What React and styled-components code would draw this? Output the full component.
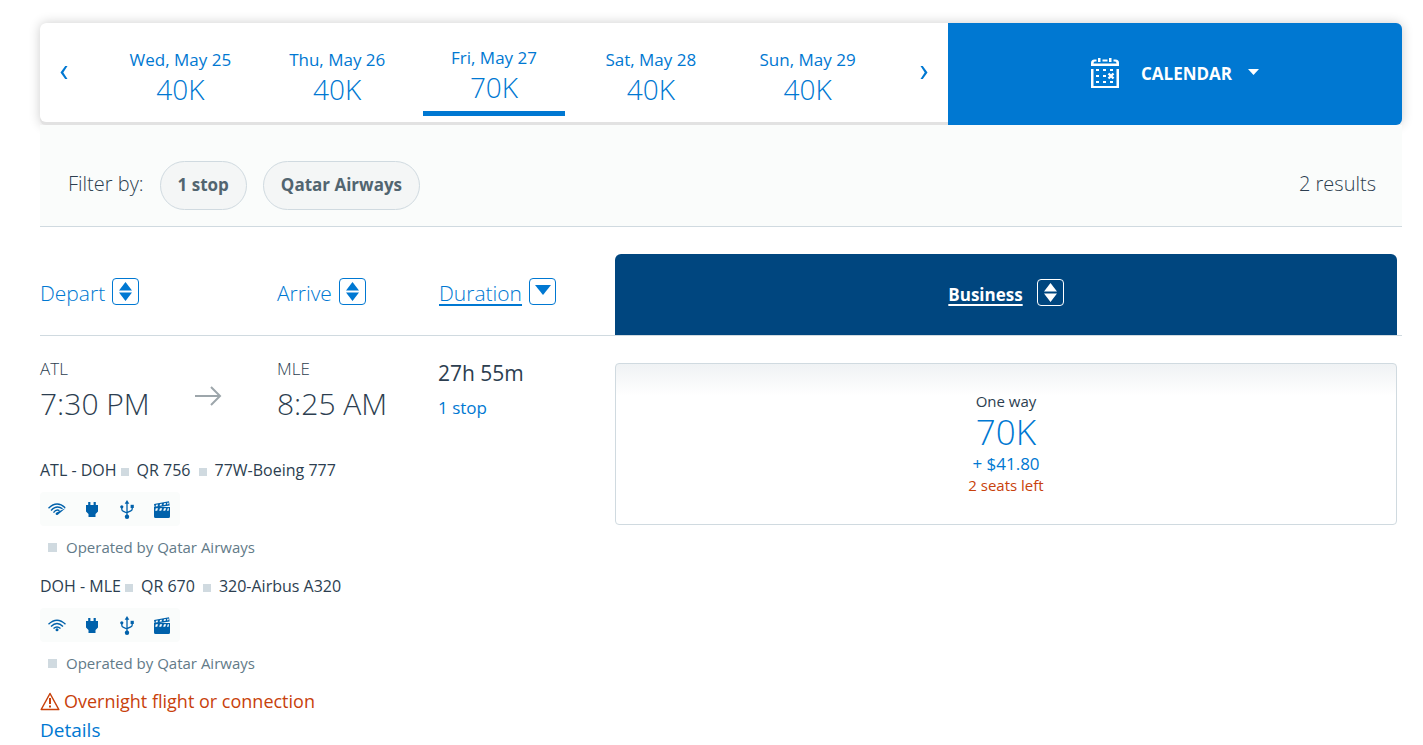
import styled, {createGlobalStyle, css} from "styled-components";
import {useState} from "react";

const GlobalStyle = createGlobalStyle`
  * {
    box-sizing: border-box;
  }
  body {
    margin: 0;
    background: #fff;
    color: #2c3e50;
    font-family: "Open Sans", "Noto Sans", sans-serif;
    font-weight: 300;
    font-size: 16px;
    line-height: 24px;
  }
  button {
    font: inherit;
    color: inherit;
    background: none;
    border: 0;
    padding: 0;
    cursor: pointer;
  }
  a {
    color: #0078d2;
    text-decoration: none;
  }
  svg {
    display: block;
    flex: none;
  }
`;

const Page = styled.main`
  padding: 23px 21px 0 40px;
`;

const DateBar = styled.div`
  display: flex;
  align-items: flex-start;
  border-radius: 6px;
  box-shadow: 0 0 12px rgba(0, 0, 0, .2);
  background: #e2e2e2;
`;

const DateStrip = styled.div`
  flex: 2;
  display: flex;
  align-items: stretch;
  height: 99px;
  background: #fff;
  border-radius: 6px 0 0 6px;
  color: #0078d2;
`;

const NavButton = styled.button`
  width: 48px;
  display: grid;
  place-items: center;
`;

const Days = styled.div`
  flex: 1;
  display: grid;
  grid-template-columns: repeat(5, 1fr);
  padding: 0 14px;
`;

const Day = styled.button`
  display: flex;
  flex-direction: column;
  align-items: center;
  margin: 0 7px 6px;
  padding-top: 25px;
  line-height: 24px;
  font-size: 17px;
  font-weight: 400;
  border-bottom: 5px solid transparent;
  ${props => props.$active && css`
    padding-top: 23px;
    border-color: #0078d2;
  `}
`;

const Price = styled.span`
  font-size: 28px;
  font-weight: 300;
  line-height: 34px;
`;

const CalendarButton = styled.button`
  flex: 1;
  display: flex;
  align-items: center;
  justify-content: center;
  gap: 22px;
  height: 102px;
  background: #0078d2;
  border-radius: 0 6px 6px 0;
  color: #fff;
  font-size: 17px;
  font-weight: 700;
`;

const CalendarLabel = styled.span`
  display: flex;
  align-items: center;
  gap: 16px;
`;

const FilterBar = styled.section`
  display: flex;
  align-items: center;
  gap: 16px;
  padding: 36px 26px 16px 28px;
  background: #fafcfb;
  border-bottom: 1px solid #d0dae0;
  font-size: 20px;
`;

const FilterText = styled.span`
  padding-bottom: 4px;

  &:last-child {
    margin-left: auto;
  }
`;

const Pill = styled.button`
  height: 49px;
  padding: 0 17px 2px;
  border: 1px solid #d0dae0;
  border-radius: 25px;
  background: #f4f6f6;
  color: #526570;
  font-size: 17px;
  font-weight: 700;
`;

const Columns = styled.div`
  display: grid;
  grid-template-columns: 237px 162px 176px 1fr;
  padding-right: 5px;
`;

const HeaderRow = styled(Columns)`
  margin-top: 27px;
  height: 82px;
  border-bottom: 1px solid #d0dae0;
`;

const SortBox = styled.span`
  width: 27px;
  height: 27px;
  display: grid;
  place-items: center;
  border: 1px solid currentColor;
  border-radius: 4px;
`;

const SortButton = styled.button`
  display: flex;
  align-items: center;
  gap: 7px;
  padding-bottom: 3px;
  color: #0078d2;
  font-size: 21px;
  text-decoration: ${props => props.$sorted ? "underline" : "none"};
  text-decoration-thickness: 2px;
  text-underline-offset: 3px;

  ${SortBox} {
    margin-bottom: 4px;
  }
`;

const CabinButton = styled(SortButton)`
  justify-content: center;
  gap: 14px;
  padding-bottom: 0;
  background: #00467f;
  border-radius: 6px 6px 0 0;
  color: #fff;
  font-size: 17px;
  font-weight: 700;
`;

const Flight = styled.article`
  display: grid;
  grid-template-columns: 575px 1fr;
  align-items: start;
  padding-right: 5px;
`;

const Times = styled.div`
  display: grid;
  grid-template-columns: 237px 161px 1fr;
  height: 102px;
  margin-top: 20px;
`;

const Stop = styled.div`
  display: flex;
  justify-content: space-between;
  padding-right: 55px;
`;

const Airport = styled.div`
  font-size: 17px;
  line-height: 26px;
`;

const Time = styled.div`
  font-size: 30px;
  line-height: 44px;
  white-space: nowrap;
`;

const ArrowWrap = styled.div`
  padding-top: 29px;
`;

const Duration = styled.div`
  font-size: 21px;
  font-weight: 400;
  line-height: 34px;
`;

const StopsLink = styled.a`
  display: block;
  font-size: 17px;
  font-weight: 400;
  line-height: 36px;
`;

const SegmentInfo = styled.div`
  display: flex;
  align-items: center;
  font-weight: 400;
`;

const Square = styled.span`
  width: 8px;
  height: 8px;
  margin: 4px 8px 0 ${props => props.$tight ? "4px" : "8px"};
  background: #d0dae0;
`;

const Amenities = styled.div`
  display: flex;
  width: 140px;
  height: 34px;
  margin: 10px 0 9px;
  padding-right: 1px;
  background: #fafcfb;
  border-radius: 4px;
  color: #0061ab;
`;

const Amenity = styled.span`
  flex: 1;
  display: grid;
  place-items: center;
`;

const Operated = styled.div`
  display: flex;
  align-items: center;
  gap: 9px;
  padding: 0 0 15px 8px;
  color: #627a88;
  font-size: 15px;
  font-weight: 400;

  &::before {
    content: "";
    width: 9px;
    height: 9px;
    background: #d0dae0;
  }
`;

const Warning = styled.div`
  display: flex;
  align-items: center;
  gap: 4px;
  margin-top: -3px;
  color: #c8410b;
  font-size: 18px;
  font-weight: 400;
  line-height: 28px;
`;

const DetailsLink = styled.a`
  display: block;
  font-size: 19px;
  font-weight: 400;
  line-height: 30px;
`;

const Fare = styled.button`
  display: flex;
  flex-direction: column;
  align-items: center;
  height: 162px;
  margin-top: 27px;
  padding-top: 27px;
  border: 1px solid #d0dae0;
  border-radius: 4px;
  background: linear-gradient(#eff2f4, #fff 32px);
  font-size: 15px;
  font-weight: 400;
  line-height: 20px;
`;

const FarePrice = styled.span`
  color: #0078d2;
  font-size: 35px;
  font-weight: 300;
  line-height: 42px;
`;

const Tax = styled.span`
  color: #0078d2;
  font-size: 17px;
  line-height: 22px;
`;

const Seats = styled.span`
  color: #c8410b;
`;

function Chevron({flip}) {
  return (
    <svg width="8" height="13" viewBox="0 0 8 13" fill="currentColor">
      <path d={flip ? "M0.5 0H2.8L7.5 6.5L2.8 13H0.5L4.7 6.5Z" : "M7.5 0H5.2L0.5 6.5L5.2 13H7.5L3.3 6.5Z"}/>
    </svg>
  );
}

function CalendarIcon() {
  return (
    <svg width="28" height="33" viewBox="0 0 28 33" fill="#fff">
      <path d="M0 8V5Q0 1.5 3.5 1.5H5.5V3.5H4Q2.5 3.5 2.5 5.5H25.5Q25.5 3.5 24 3.5H22.5V1.5H24.5Q28 1.5 28 5V8ZM7 0H9.5V4H7ZM11.5 1.5H16.5V3.5H11.5ZM18 0H20.5V4H18Z"/>
      <path d="M0 11H2.5V28H25.5V11H28V30H0Z"/>
      <path d="M5 11H8V13H5ZM12 11H15V13H12ZM19 11H22V13H19ZM5 17H8V19H5ZM12 17H15V19H12ZM5 23H8V25H5ZM12 23H15V25H12ZM19 23H22V25H19Z"/>
      <path d="M17.5 15.5L22.5 20.5M22.5 15.5L17.5 20.5" stroke="#fff" strokeWidth="2.4"/>
    </svg>
  );
}

function SortIcon({down}) {
  return (
    <SortBox>
      {down ? (
        <svg width="16" height="20" viewBox="0 0 16 20" fill="currentColor">
          <path d="M0 4H16L8 14Z"/>
        </svg>
      ) : (
        <svg width="13" height="19" viewBox="0 0 13 19" fill="currentColor">
          <path d="M6.5 0L13 8.5H0ZM0 10.5H13L6.5 19Z"/>
        </svg>
      )}
    </SortBox>
  );
}

function WifiIcon({satellite}) {
  return (
    <svg width="18" height="14" viewBox="0 0 18 14" fill="none" stroke="currentColor" strokeWidth="1.4">
      <path d={satellite
        ? "M0.5 6.2Q9 -1.8 17.2 5.8M3 8.5Q8.5 2.6 14.5 6.8M5.5 10.6Q8.2 6.8 11.5 8.6"
        : "M0.5 6.2Q9 -1.8 17.5 6.2M3 8.5Q9 2.6 15 8.5M5.5 10.6Q9 7.2 12.5 10.6"}/>
      {satellite
        ? <path d="M17.8 6L9.8 12.8Q8 13.6 7.6 12Q7.6 11 8.6 10.6Z" fill="currentColor" stroke="none"/>
        : <circle cx="9" cy="11.8" r="1.5" fill="currentColor" stroke="none"/>}
    </svg>
  );
}

function PlugIcon() {
  return (
    <svg width="12" height="15" viewBox="0 0 12 15" fill="currentColor">
      <path d="M2.2 0H4.4V3H7.6V0H9.8V3H12V9.5L9.5 12V15H2.5V12L0 9.5V3H2.2Z"/>
    </svg>
  );
}

function UsbIcon() {
  return (
    <svg width="14" height="19" viewBox="0 0 14 19" fill="currentColor">
      <path d="M7 0L9.3 3.8H4.7Z"/>
      <circle cx="7" cy="16.8" r="2.2"/>
      <circle cx="1.8" cy="6.8" r="1.6"/>
      <path d="M10.6 4.8H13.8V8H10.6Z"/>
      <path d="M7 3V17M1.8 7V9.2Q1.8 10.8 3.5 11.4L7 13M12.2 7V9Q12.2 10.2 10.8 10.8L7 12.6" fill="none" stroke="currentColor" strokeWidth="1.3"/>
    </svg>
  );
}

function MovieIcon() {
  return (
    <svg width="16" height="17" viewBox="0 0 16 17" fill="currentColor">
      <path d="M0 3L15 0.2L15.7 4.6L0.7 6.7ZM0 6H16V15.5Q16 17 14.5 17H1.5Q0 17 0 15.5Z"/>
      <path d="M2 3.8L4 3.4L3.6 5.2L1.6 5.6ZM6 3L8 2.7L7.6 4.4L5.6 4.8ZM10 2.3L12 1.9L11.6 3.7L9.6 4ZM13.3 1.7L14.5 1.5L14.7 3.1L13.1 3.4ZM1.8 7.2H4L3.2 9.8H1.2ZM6 7.2H8.2L7.2 9.8H5.2ZM10 7.2H12.2L11.2 9.8H9.2ZM13.8 7.2H15L14.6 9.8H13Z" fill="#fafcfb"/>
    </svg>
  );
}

const days = [
  {label: "Wed, May 25", price: "40K"},
  {label: "Thu, May 26", price: "40K"},
  {label: "Fri, May 27", price: "70K"},
  {label: "Sat, May 28", price: "40K"},
  {label: "Sun, May 29", price: "40K"},
];

const segments = [
  {route: "ATL - DOH", number: "QR 756", plane: "77W-Boeing 777", satellite: true},
  {route: "DOH - MLE", number: "QR 670", plane: "320-Airbus A320", satellite: false},
];

export default function App() {
  const [activeDay,setActiveDay] = useState(2);
  return (
    <>
      <GlobalStyle/>
      <Page>
        <DateBar>
          <DateStrip>
            <NavButton aria-label="Previous dates"><Chevron/></NavButton>
            <Days>
              {days.map((day, i) => (
                <Day key={day.label} $active={i===activeDay} onClick={() => setActiveDay(i)}>
                  <span>{day.label}</span>
                  <Price>{day.price}</Price>
                </Day>
              ))}
            </Days>
            <NavButton aria-label="Next dates"><Chevron flip/></NavButton>
          </DateStrip>
          <CalendarButton>
            <CalendarIcon/>
            <CalendarLabel>
              CALENDAR
              <svg width="11" height="10" viewBox="0 0 11 10" fill="#fff">
                <path d="M0 0H11L5.5 6Z"/>
              </svg>
            </CalendarLabel>
          </CalendarButton>
        </DateBar>

        <FilterBar>
          <FilterText>Filter by:</FilterText>
          <Pill>1 stop</Pill>
          <Pill>Qatar Airways</Pill>
          <FilterText>2 results</FilterText>
        </FilterBar>

        <HeaderRow>
          <SortButton>Depart<SortIcon/></SortButton>
          <SortButton>Arrive<SortIcon/></SortButton>
          <SortButton $sorted>Duration<SortIcon down/></SortButton>
          <CabinButton $sorted>Business<SortIcon/></CabinButton>
        </HeaderRow>

        <Flight>
          <div>
            <Times>
              <Stop>
                <div>
                  <Airport>ATL</Airport>
                  <Time>7:30 PM</Time>
                </div>
                <ArrowWrap>
                  <svg width="27" height="22" viewBox="0 0 27 22" fill="none" stroke="#9da6ab" strokeWidth="2">
                    <path d="M0 11H25M16 2L25 11L16 20"/>
                  </svg>
                </ArrowWrap>
              </Stop>
              <div>
                <Airport>MLE</Airport>
                <Time>8:25 AM</Time>
              </div>
              <div>
                <Duration>27h 55m</Duration>
                <StopsLink href="#stops">1 stop</StopsLink>
              </div>
            </Times>
            {segments.map(segment => (
              <div key={segment.route}>
                <SegmentInfo>
                  {segment.route}
                  <Square $tight/>
                  {segment.number}
                  <Square/>
                  {segment.plane}
                </SegmentInfo>
                <Amenities>
                  <Amenity><WifiIcon satellite={segment.satellite}/></Amenity>
                  <Amenity><PlugIcon/></Amenity>
                  <Amenity><UsbIcon/></Amenity>
                  <Amenity><MovieIcon/></Amenity>
                </Amenities>
                <Operated>Operated by Qatar Airways</Operated>
              </div>
            ))}
            <Warning>
              <svg width="20" height="19" viewBox="0 0 20 19" fill="none" stroke="currentColor" strokeWidth="1.5">
                <path d="M10 1.5L18.8 17.5H1.2Z" strokeLinejoin="round"/>
                <path d="M10 6V12M10 13.5V15.5" strokeWidth="2"/>
              </svg>
              Overnight flight or connection
            </Warning>
            <DetailsLink href="#details">Details</DetailsLink>
          </div>
          <Fare>
            <span>One way</span>
            <FarePrice>70K</FarePrice>
            <Tax>+ $41.80</Tax>
            <Seats>2 seats left</Seats>
          </Fare>
        </Flight>
      </Page>
    </>
  );
}
